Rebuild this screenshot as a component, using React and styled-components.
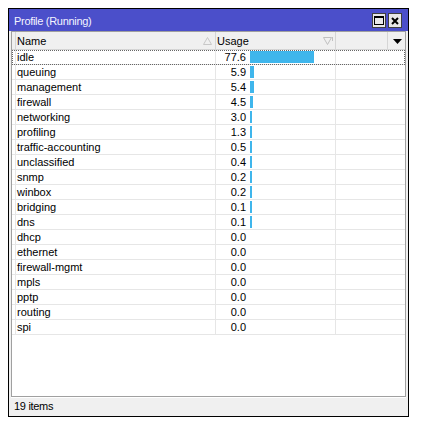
import React from 'react';
import styled, {createGlobalStyle} from 'styled-components';

const GlobalStyle = createGlobalStyle`
body {
    margin: 0;
    background: #fff;
    font-family: "Liberation Sans", Arial, sans-serif;
    font-size: 11px;
    color: #000;
}`;

const Page = styled.div`
padding: 8px;`;

const Window = styled.div`
width: 399px;
height: 407px;
border: 1px solid #000;
background: #f0f0f0;
display: flex;
flex-direction: column;`;

const TitleBar = styled.div`
height: 22px;
flex: none;
background: #4b4fca;
color: #f4f4ff;
display: flex;
align-items: center;
justify-content: space-between;
padding: 1px 6px 0 5px;
box-sizing: border-box;
letter-spacing: -0.3px;`;

const TitleButtons = styled.div`
display: flex;
gap: 2px;`;

const TitleButton = styled.div`
width: 12px;
height: 13px;
border: 1px solid #404040;
background: #e8e8e8;
display: flex;
align-items: center;
justify-content: center;`;

const Body = styled.div`
flex: 1;
display: flex;
flex-direction: column;
padding: 0 2px;
min-height: 0;`;

const Grid = styled.div`
flex: 1;
background: #fff;
border: 1px solid #a0a0a0;
display: flex;
flex-direction: column;`;

const HeaderRow = styled.div`
height: 17px;
display: grid;
grid-template-columns: 4px 200px 120px 52px 17px;
background: #f0f0f0;
border-bottom: 1px solid #d5d5d5;`;

const HeaderCell = styled.div`
border-right: 1px solid #d5d5d5;
display: flex;
align-items: center;
justify-content: space-between;
padding: 1px ${p => p.$pad || 0}px 0 1px;
&:last-child {
    border-right: none;
    justify-content: center;
}`;

const Row = styled.div`
height: 14px;
display: grid;
grid-template-columns: 4px 200px 120px 1fr;
border-bottom: 1px solid #e6e6e6;
outline: ${p => (p.$focused ? '1px dotted #666' : 'none')};
outline-offset: -1px;`;

const Cell = styled.div`
border-right: 1px solid #e6e6e6;
display: flex;
align-items: center;
padding-left: 1px;
line-height: 14px;
white-space: nowrap;
&:last-child {
    border-right: none;
}`;

const Value = styled.span`
width: 29px;
text-align: right;`;

const Bar = styled.div`
height: 12px;
margin-left: 4px;
background: #3fb6ec;`;

const StatusBar = styled.div`
height: 19px;
flex: none;
display: flex;
align-items: center;
padding: 0 0 3px 3px;
box-sizing: border-box;
border-top: 1px solid #fff;
letter-spacing: -0.3px;`;

const SortUp = () => (
    <svg width="9" height="8" viewBox="0 0 9 8">
        <path d="M4.5 0.5 L8.5 7.5 L0.5 7.5 Z" fill="none" stroke="#c8c8c8" />
    </svg>
);

const SortDown = () => (
    <svg width="10" height="9" viewBox="0 0 10 9">
        <path d="M0.5 0.5 L8.5 0.5 L4.5 7.5 Z" fill="none" stroke="#c0c0c0" />
        <path d="M9.5 0 L9.5 4" stroke="#c0c0c0" />
    </svg>
);

const DropArrow = () => (
    <svg width="9" height="5" viewBox="0 0 9 5">
        <path d="M0 0 L9 0 L4.5 5 Z" fill="#000" />
    </svg>
);

const MaxIcon = () => (
    <svg width="10" height="9" viewBox="0 0 10 9">
        <rect x="0.5" y="0.5" width="9" height="8" fill="none" stroke="#000" />
        <path d="M0 1.5 L10 1.5" stroke="#000" />
    </svg>
);

const CloseIcon = () => (
    <svg width="8" height="8" viewBox="0 0 8 8">
        <path d="M1 1 L7 7 M7 1 L1 7" stroke="#000" strokeWidth="2" />
    </svg>
);

const items = [
    ['idle', 77.6],
    ['queuing', 5.9],
    ['management', 5.4],
    ['firewall', 4.5],
    ['networking', 3.0],
    ['profiling', 1.3],
    ['traffic-accounting', 0.5],
    ['unclassified', 0.4],
    ['snmp', 0.2],
    ['winbox', 0.2],
    ['bridging', 0.1],
    ['dns', 0.1],
    ['dhcp', 0.0],
    ['ethernet', 0.0],
    ['firewall-mgmt', 0.0],
    ['mpls', 0.0],
    ['pptp', 0.0],
    ['routing', 0.0],
    ['spi', 0.0],
];

const barWidth = v => (v > 0 ? Math.max(2, Math.floor(v * 0.825)) : 0);

const App = () => (
    <>
        <GlobalStyle />
        <Page>
            <Window>
                <TitleBar>
                    <span>Profile (Running)</span>
                    <TitleButtons>
                        <TitleButton><MaxIcon /></TitleButton>
                        <TitleButton><CloseIcon /></TitleButton>
                    </TitleButtons>
                </TitleBar>
                <Body>
                    <Grid>
                        <HeaderRow>
                            <HeaderCell />
                            <HeaderCell $pad={3}>Name <SortUp /></HeaderCell>
                            <HeaderCell $pad={2}>Usage <SortDown /></HeaderCell>
                            <HeaderCell />
                            <HeaderCell><DropArrow /></HeaderCell>
                        </HeaderRow>
                        {items.map(([name, usage], i) => (
                            <Row key={name} $focused={i === 0}>
                                <Cell />
                                <Cell>{name}</Cell>
                                <Cell>
                                    <Value>{usage.toFixed(1)}</Value>
                                    {usage > 0 && <Bar style={{width: barWidth(usage)}} />}
                                </Cell>
                                <Cell />
                            </Row>
                        ))}
                    </Grid>
                    <StatusBar>19 items</StatusBar>
                </Body>
            </Window>
        </Page>
    </>
);

export default App;
